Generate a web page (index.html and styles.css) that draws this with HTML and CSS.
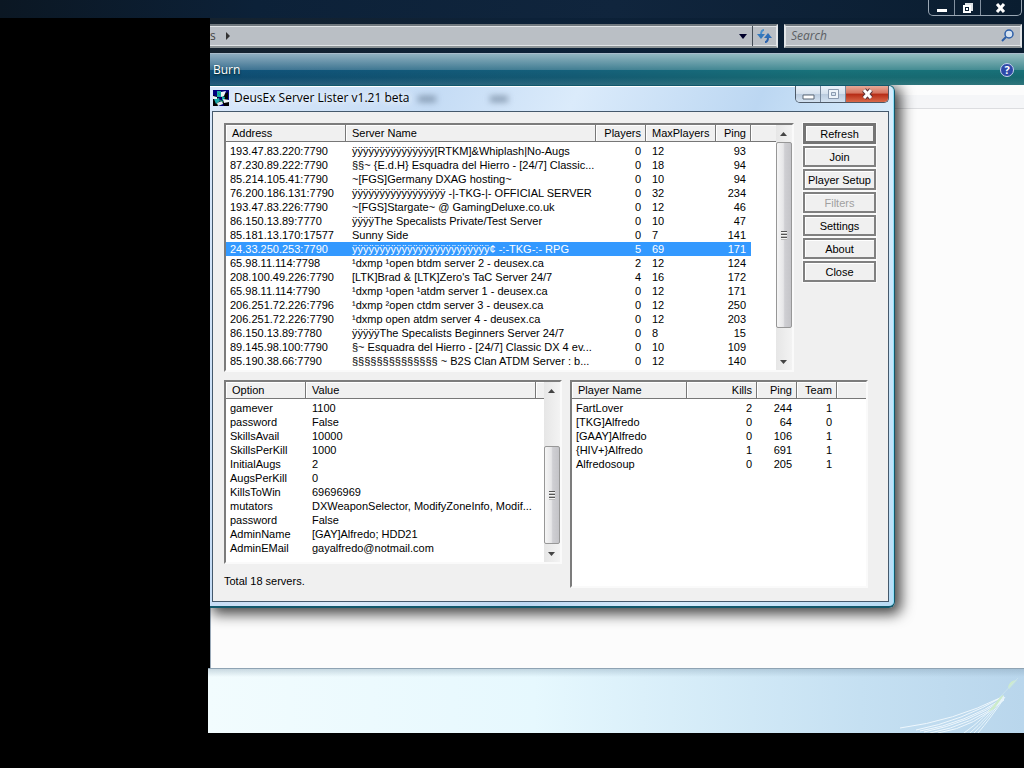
FILE: index.html
```html
<!DOCTYPE html>
<html lang="en">

<head>
  <meta charset="UTF-8">
  <title>DeusEx Server Lister</title>
  <link rel="stylesheet" href="styles.css">
</head>

<body>
  <header class="caption">
    <div class="caption-buttons">
      <button type="button" aria-label="Minimize"><svg width="12" height="12"><path d="M1 7h10v3H1z" fill="#fff"/></svg></button>
      <button type="button" aria-label="Restore"><svg width="12" height="12"><path d="M3 1h8v8H9V3H3z" fill="#dfe4e8"/><path d="M2 4h6v6H2z" fill="#0d2033" stroke="#fff" stroke-width="2"/><path d="M4 6h2v2H4z" fill="#fff"/></svg></button>
      <button type="button" aria-label="Close"><svg width="12" height="12"><path d="M2 2l7 8M9 2l-7 8" stroke="#fff" stroke-width="3"/></svg></button>
    </div>
  </header>

  <main class="explorer">
    <nav class="navbar">
      <div class="address">
        <span class="crumb">s</span>
        <svg width="6" height="8"><path d="M1 0l4 4-4 4z" fill="#333"/></svg>
        <button class="drop" type="button" aria-label="Previous locations"><svg width="8" height="5"><path d="M0 0h8L4 5z" fill="#00002a"/></svg></button>
        <button class="reload" type="button" aria-label="Reload"><svg width="16" height="16"><path d="M8 2Q5 2 5 7" fill="none" stroke="#4a90cc" stroke-width="2"/><path d="M1 6h8l-4 5z" fill="#3478bc"/><path d="M9 14q3 0 3-5" fill="none" stroke="#2b62ad" stroke-width="2"/><path d="M8 10h8l-4-5z" fill="#2f6fb8"/></svg></button>
      </div>
      <label class="search">
        <input type="text" placeholder="Search" aria-label="Search">
        <svg width="14" height="14"><circle cx="8" cy="5" r="4" fill="#d5e2f0" stroke="#2c5ea8" stroke-width="1.5"/><path d="M5 8l-4 4" stroke="#2c5ea8" stroke-width="2"/></svg>
      </label>
    </nav>

    <div class="toolbar">
      <button class="burn" type="button">Burn</button>
      <button class="help" type="button" aria-label="Help">?</button>
    </div>

    <div class="content">
      <div class="columns"></div>

      <section class="window">
        <div class="titlebar">
          <svg class="app-icon" width="16" height="16">
            <path d="M0 0h16v16H0z" fill="#00007c"/>
            <path d="M0 5l5 2 2 4-2 5H0zM8 6l7-4v7l-5 2zM9 11l7 1v4h-5z" fill="#000"/>
            <path d="M4 1h4v6H4zM1 9l5-1 1 3-4 3zM9 6l3 1-1 4-2-1z" fill="#18a9a8"/>
            <path d="M8 2l5-1-2 5-3 1zM0 6l4 1v2H0zM10 9l6 1v2l-5 1z" fill="#eef6f6"/>
            <path d="M4 13l5-2 1 3-5 2z" fill="#dfeeee"/>
            <path d="M7 10l3 2M5 3l2 2" stroke="#1bb84a"/>
          </svg>
          <h1>DeusEx Server Lister v1.21 beta</h1>
          <div class="ghosts"><span></span><span></span></div>
          <div class="window-buttons">
            <button type="button" aria-label="Minimize"><svg width="13" height="12"><path d="M1 7h11v4H1z" fill="#fff" stroke="#5c6877"/></svg></button>
            <button type="button" aria-label="Maximize"><svg width="13" height="12"><path d="M1.500 1.500h10v9h-10z" fill="#eef4fa" stroke="#8b9bb0"/><path d="M4.500 4.500h4v3h-4z" fill="#d5e2ef" stroke="#8b9bb0"/></svg></button>
            <button class="close" type="button" aria-label="Close"><svg width="13" height="12"><path d="M3 2l7 8M10 2l-7 8" stroke="#5c3338" stroke-width="5"/><path d="M3 2l7 8M10 2l-7 8" stroke="#fff" stroke-width="3"/></svg></button>
          </div>
        </div>

        <div class="client">
          <div class="top">
            <div class="list servers">
              <table>
                <colgroup><col class="w120"><col class="w250"><col class="w50"><col class="w70"><col class="w35"><col></colgroup>
                <thead>
                  <tr><th>Address</th><th>Server Name</th><th class="num">Players</th><th>MaxPlayers</th><th class="num">Ping</th><th></th></tr>
                </thead>
                <tbody>
                  <tr><td>193.47.83.220:7790</td><td>ÿÿÿÿÿÿÿÿÿÿÿÿÿÿÿ[RTKM]&amp;Whiplash|No-Augs</td><td class="num">0</td><td>12</td><td class="num">93</td></tr>
                  <tr><td>87.230.89.222:7790</td><td>§§~ {E.d.H} Esquadra del Hierro - [24/7] Classic...</td><td class="num">0</td><td>18</td><td class="num">94</td></tr>
                  <tr><td>85.214.105.41:7790</td><td>~[FGS]Germany DXAG hosting~</td><td class="num">0</td><td>10</td><td class="num">94</td></tr>
                  <tr><td>76.200.186.131:7790</td><td>ÿÿÿÿÿÿÿÿÿÿÿÿÿÿÿÿÿ -|-TKG-|- OFFICIAL SERVER</td><td class="num">0</td><td>32</td><td class="num">234</td></tr>
                  <tr><td>193.47.83.226:7790</td><td>~[FGS]Stargate~ @ GamingDeluxe.co.uk</td><td class="num">0</td><td>12</td><td class="num">46</td></tr>
                  <tr><td>86.150.13.89:7770</td><td>ÿÿÿÿThe Specalists Private/Test Server</td><td class="num">0</td><td>10</td><td class="num">47</td></tr>
                  <tr><td>85.181.13.170:17577</td><td>Sunny Side</td><td class="num">0</td><td>7</td><td class="num">141</td></tr>
                  <tr class="selected"><td>24.33.250.253:7790</td><td>ÿÿÿÿÿÿÿÿÿÿÿÿÿÿÿÿÿÿÿÿÿÿÿÿÿ¢ -:-TKG-:- RPG</td><td class="num">5</td><td>69</td><td class="num">171</td></tr>
                  <tr><td>65.98.11.114:7798</td><td>¹dxmp ¹open btdm server 2 - deusex.ca</td><td class="num">2</td><td>12</td><td class="num">124</td></tr>
                  <tr><td>208.100.49.226:7790</td><td>[LTK]Brad &amp; [LTK]Zero's TaC Server 24/7</td><td class="num">4</td><td>16</td><td class="num">172</td></tr>
                  <tr><td>65.98.11.114:7790</td><td>¹dxmp ¹open ¹atdm server 1 - deusex.ca</td><td class="num">0</td><td>12</td><td class="num">171</td></tr>
                  <tr><td>206.251.72.226:7796</td><td>¹dxmp ²open ctdm server 3 - deusex.ca</td><td class="num">0</td><td>12</td><td class="num">250</td></tr>
                  <tr><td>206.251.72.226:7790</td><td>¹dxmp open atdm server 4 - deusex.ca</td><td class="num">0</td><td>12</td><td class="num">203</td></tr>
                  <tr><td>86.150.13.89:7780</td><td>ÿÿÿÿÿThe Specalists Beginners Server 24/7</td><td class="num">0</td><td>8</td><td class="num">15</td></tr>
                  <tr><td>89.145.98.100:7790</td><td>§~ Esquadra del Hierro - [24/7] Classic DX 4 ev...</td><td class="num">0</td><td>10</td><td class="num">109</td></tr>
                  <tr><td>85.190.38.66:7790</td><td>§§§§§§§§§§§§§§ ~ B2S Clan ATDM Server : b...</td><td class="num">0</td><td>12</td><td class="num">140</td></tr>
                </tbody>
              </table>
              <div class="scrollbar">
                <button type="button" aria-label="Scroll up"><svg width="8" height="4"><path d="M0 4h7L3.500 0z"/></svg></button>
                <div class="thumb"></div>
                <button type="button" aria-label="Scroll down"><svg width="8" height="4"><path d="M0 0h7L3.500 4z"/></svg></button>
              </div>
            </div>
            <div class="actions">
              <button class="default" type="button">Refresh</button>
              <button type="button">Join</button>
              <button type="button">Player Setup</button>
              <button type="button" disabled>Filters</button>
              <button type="button">Settings</button>
              <button type="button">About</button>
              <button type="button">Close</button>
            </div>
          </div>

          <div class="bottom">
            <div class="left">
              <div class="list options">
                <table>
                  <colgroup><col class="w80"><col class="w230"><col></colgroup>
                  <thead>
                    <tr><th>Option</th><th>Value</th><th></th></tr>
                  </thead>
                  <tbody>
                    <tr><td>gamever</td><td>1100</td></tr>
                    <tr><td>password</td><td>False</td></tr>
                    <tr><td>SkillsAvail</td><td>10000</td></tr>
                    <tr><td>SkillsPerKill</td><td>1000</td></tr>
                    <tr><td>InitialAugs</td><td>2</td></tr>
                    <tr><td>AugsPerKill</td><td>0</td></tr>
                    <tr><td>KillsToWin</td><td>69696969</td></tr>
                    <tr><td>mutators</td><td>DXWeaponSelector, ModifyZoneInfo, Modif...</td></tr>
                    <tr><td>password</td><td>False</td></tr>
                    <tr><td>AdminName</td><td>[GAY]Alfredo; HDD21</td></tr>
                    <tr><td>AdminEMail</td><td>gayalfredo@notmail.com</td></tr>
                  </tbody>
                </table>
                <div class="scrollbar">
                  <button type="button" aria-label="Scroll up"><svg width="8" height="4"><path d="M0 4h7L3.500 0z"/></svg></button>
                  <div class="thumb"></div>
                  <button type="button" aria-label="Scroll down"><svg width="8" height="4"><path d="M0 0h7L3.500 4z"/></svg></button>
                </div>
              </div>
              <p class="status">Total 18 servers.</p>
            </div>
            <div class="list players">
              <table>
                <colgroup><col class="w115"><col class="w70"><col class="w40"><col class="w40"><col></colgroup>
                <thead>
                  <tr><th>Player Name</th><th class="num">Kills</th><th class="num">Ping</th><th class="num">Team</th><th></th></tr>
                </thead>
                <tbody>
                  <tr><td>FartLover</td><td class="num">2</td><td class="num">244</td><td class="num">1</td></tr>
                  <tr><td>[TKG]Alfredo</td><td class="num">0</td><td class="num">64</td><td class="num">0</td></tr>
                  <tr><td>[GAAY]Alfredo</td><td class="num">0</td><td class="num">106</td><td class="num">1</td></tr>
                  <tr><td>{HIV+}Alfredo</td><td class="num">1</td><td class="num">691</td><td class="num">1</td></tr>
                  <tr><td>Alfredosoup</td><td class="num">0</td><td class="num">205</td><td class="num">1</td></tr>
                </tbody>
              </table>
            </div>
          </div>
        </div>
      </section>
    </div>
  </main>

  <footer class="details">
    <svg width="122" height="56" fill="none">
      <path d="M0 51Q54 44 102 20M16 53Q62 44 104 19M20 54Q66 46 104 21M24 55Q70 46 104 22M30 56Q72 48 104 23M38 56Q76 50 104 22" stroke="#eef7fd" stroke-width="1"/>
      <path d="M64 56Q84 42 102 20M70 56Q86 42 103 20M74 56Q88 42 104 20M78 56Q90 42 105 20" stroke="#e8f5fb" stroke-width="1"/>
      <path d="M88 35l13-16 3-1-10 14zM108 10q2-7 9-7l-8 9z" fill="#cdeccb"/>
      <path d="M100 20L118 1" stroke="#c8e2ee"/>
    </svg>
  </footer>
</body>

</html>
```
FILE: styles.css
```css
* {
  box-sizing: border-box;
  margin: 0;
  padding: 0;
}

body {
  display: flex;
  flex-direction: column;
  min-height: 100vh;
  background: #000;
  font: 12px/16px "Open Sans", "Noto Sans", sans-serif;
}

button {
  font: inherit;
  border: 0;
  background: none;
}

svg {
  display: block;
}

/* outer explorer window */
.caption {
  display: flex;
  justify-content: flex-end;
  height: 18px;
  padding-right: 2px;
  background: linear-gradient(90deg, #0b1723, #0c2138 25%, #10253d 60%, #0a1d30);
}

.caption-buttons {
  display: flex;
  height: 16px;
  border: 1px solid #9aa7b4;
  border-top: 0;
  border-radius: 0 0 5px 5px;
}

.caption-buttons button {
  display: flex;
  align-items: center;
  justify-content: center;
  width: 26px;
  border-right: 1px solid #8391a0;
}

.caption-buttons button:last-child {
  width: 40px;
  border-right: 0;
}

.explorer {
  flex: 1;
  display: flex;
  flex-direction: column;
  margin-left: 210px;
}

.navbar {
  display: flex;
  gap: 6px;
  padding: 6px 2px 5px 0;
  background: linear-gradient(90deg, #15222e, #0c2138 40%, #0a1d30);
}

.address,
.search {
  display: flex;
  align-items: center;
  height: 24px;
  border: 2px solid #e2e5e8;
  border-top-color: #71797f;
  border-bottom-color: #8d9497;
  background: #babfc5;
  box-shadow: inset 0 1px #e2e5e8, inset 0 -1px #e2e5e8;
}

.address {
  flex: 1;
  gap: 9px;
  border-left: 0;
}

.crumb {
  color: #444;
}

.drop {
  margin-left: auto;
}

.reload {
  margin-right: 1px;
  padding: 2px 3px;
  border-left: 1px solid #444d56;
}

.drop + .reload {
  margin-left: -4px;
}

.search {
  width: 238px;
  padding: 0 5px;
}

.search input {
  flex: 1;
  min-width: 0;
  border: 0;
  outline: 0;
  background: none;
  font: italic 12px/16px "Open Sans", "Noto Sans", sans-serif;
}

.search input::placeholder {
  color: #5c6064;
}

.toolbar {
  display: flex;
  align-items: center;
  justify-content: space-between;
  height: 32px;
  padding: 0 10px 0 3px;
  border-top: 1px solid #a9bccb;
  background:
    linear-gradient(#fff8, #fff3 50%, #0000 52%, #0001 75%, #8883),
    linear-gradient(90deg, #0f5078, #15607a 45%, #18727a 75%, #187078);
}

.burn {
  color: #fff;
  text-shadow: 0 1px 2px #022;
}

.help {
  width: 14px;
  height: 14px;
  border: 1px solid #c6d2ee;
  border-radius: 50%;
  background: #2d49a8;
  color: #fff;
  font-size: 11px;
  font-weight: bold;
  line-height: 12px;
}

.content {
  flex: 1;
  position: relative;
  padding-top: 10px;
  border-left: 1px solid #9aa9b8;
  background: #fcfcfc;
}

.columns {
  height: 14px;
  border-bottom: 1px solid #dcdde0;
  background: #f5f6f8;
}

.details {
  display: flex;
  align-items: flex-end;
  justify-content: flex-end;
  height: 65px;
  margin: 0 0 35px 208px;
  padding-right: 2px;
  border-top: 1px solid #8fa3b3;
  background:
    linear-gradient(#7893a855, #fff0 8px),
    linear-gradient(90deg, #f2fcfe, #e6f8fe 40%, #c5e0f2 80%, #b9d6ec);
}

/* server lister window, floats over the explorer */
.window {
  position: absolute;
  top: 0;
  left: -1px;
  right: 129px;
  padding: 0 5px 4px 2px;
  border: solid #12586c;
  border-width: 1px 1px 2px 0;
  border-radius: 0 6px 6px 0;
  background: linear-gradient(115deg, #d9e8fa, #c5dcf5 25%, #dbebfb 40%, #bcd7f2 60%, #d8ecfc 75%, #b8dcf6);
  box-shadow: inset -1px 0 #8fe0f8, inset 0 1px #fff, 4px 4px 14px 2px #000b;
  clip-path: inset(0 -40px -40px 0);
}

.titlebar {
  display: flex;
  align-items: flex-start;
  height: 25px;
}

.app-icon {
  margin: 4px 5px 0 1px;
}

.titlebar h1 {
  padding: 4px 0;
  font-size: 12px;
  font-weight: normal;
  line-height: 16px;
  text-shadow: 0 0 6px #fff, 0 0 10px #fff;
}

.ghosts {
  flex: 1;
  display: flex;
  gap: 54px;
  padding: 10px 8px;
}

.ghosts span {
  width: 18px;
  height: 6px;
  background: #54687f99;
  filter: blur(3px);
}

.window-buttons {
  display: flex;
  height: 17px;
  border: 1px solid #4d5967;
  border-top: 0;
  border-radius: 0 0 5px 5px;
  overflow: hidden;
}

.window-buttons button {
  display: flex;
  align-items: center;
  justify-content: center;
  width: 25px;
  border-right: 1px solid #75869a;
  background: linear-gradient(#eaf1f9, #d5e1ee 48%, #b9cadd 50%, #d3e2f1);
}

.window-buttons .close {
  width: 42px;
  border-right: 0;
  background: linear-gradient(#e8a997, #d5745f 45%, #b52a14 50%, #d9694a);
}

.client {
  padding: 11px 12px 13px 11px;
  border: 1px solid #45596c;
  background: #f0f0f0;
  font: 11px/14px "Liberation Sans", Arial, sans-serif;
}

.top {
  display: flex;
  gap: 9px;
}

.bottom {
  display: grid;
  grid-template-columns: 338fr 298fr;
  gap: 8px;
  margin-top: 8px;
  padding-right: 8px;
}

/* list views */
.list {
  display: flex;
  min-width: 0;
  border: 2px solid;
  border-color: #7c7c7c #fafafa #fafafa #7c7c7c;
  background: #fff;
  overflow: hidden;
}

.servers {
  flex: 1;
  height: 249px;
}

.left {
  min-width: 0;
}

.options {
  height: 184px;
}

.players {
  height: 208px;
}

.status {
  padding-top: 10px;
}

table {
  flex: 1;
  align-self: flex-start;
  width: 100%;
  min-width: 0;
  table-layout: fixed;
  border-collapse: separate;
  border-spacing: 0;
}

th,
td {
  height: 14px;
  padding: 0 5px 0 6px;
  font-weight: normal;
  line-height: 14px;
  text-align: left;
  white-space: nowrap;
  overflow: hidden;
}

th {
  height: 17px;
  padding-right: 4px;
  border-right: 1px solid #777;
  border-bottom: 1px solid #777;
  background: #f0f0f0;
  box-shadow: inset 1px 1px #fff;
}

th:last-child {
  border-right: 0;
}

tbody::before {
  content: "";
  display: block;
  height: 2px;
}

td:first-child {
  padding-left: 4px;
}

.num {
  text-align: right;
}

.selected td {
  background: #3399ff;
  color: #fff;
}

.w35 { width: 35px; }
.w40 { width: 40px; }
.w50 { width: 50px; }
.w70 { width: 70px; }
.w80 { width: 80px; }
.w115 { width: 115px; }
.w120 { width: 120px; }
.w230 { width: 230px; }
.w250 { width: 250px; }

.scrollbar {
  display: flex;
  flex-direction: column;
  flex: 0 0 16px;
  background: linear-gradient(90deg, #e6e6e6, #f3f3f3);
}

.scrollbar button {
  display: flex;
  align-items: center;
  justify-content: center;
  height: 17px;
}

.scrollbar button:last-child {
  margin-top: auto;
}

.scrollbar svg {
  fill: #444;
}

.thumb {
  display: flex;
  align-items: center;
  justify-content: center;
  height: 186px;
  border: 1px solid #979797;
  border-radius: 2px;
  background: linear-gradient(90deg, #f5f5f5, #e6e6e8 45%, #cfcfd3 55%, #c4c4c8);
}

.options .thumb {
  height: 98px;
  margin-top: 47px;
}

.thumb::before {
  content: "";
  width: 6px;
  height: 9px;
  background: repeating-linear-gradient(#555 0 1px, #f5f5f5 1px 2px, #bbb 2px 3px);
}

/* dialog buttons */
.actions {
  display: flex;
  flex-direction: column;
  gap: 2px;
  width: 73px;
}

.actions button {
  height: 21px;
  border: 2px solid #808080;
  background: #f0f0f0;
  box-shadow: inset 1px 1px #fff, 0 0 0 1px #fafafa;
  line-height: 14px;
  white-space: nowrap;
}

.actions .default {
  border: 3px solid #747474;
}

.actions button:disabled {
  color: #a0a0a0;
}
```
